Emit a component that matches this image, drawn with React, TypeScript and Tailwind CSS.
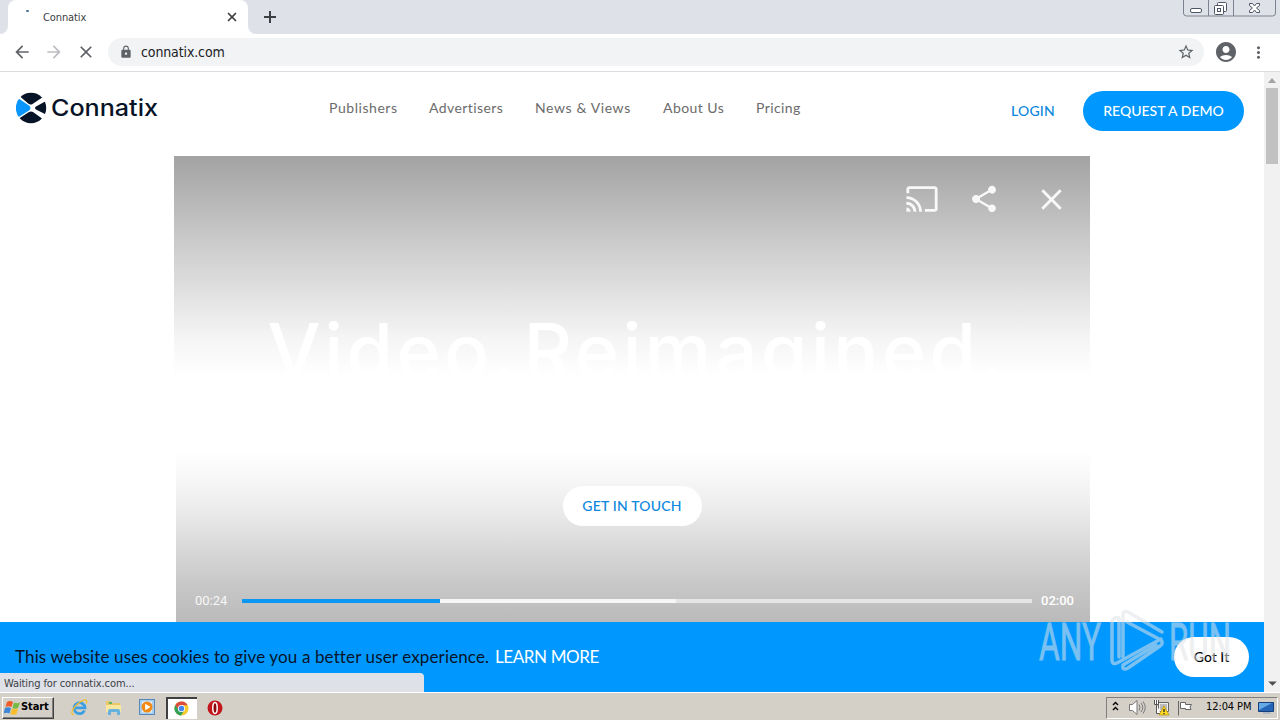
import type { ReactNode } from "react";
import { X } from "lucide-react";
import { MdArrowBack, MdArrowForward, MdAccountCircle, MdCast, MdClose, MdLock, MdMoreVert, MdShare, MdStarBorder } from "react-icons/md";

const NAV_LINKS = [
  { label: "Publishers", className: "w-[68px] tracking-[0.55px]" },
  { label: "Advertisers", className: "w-[74px] tracking-[0.42px]" },
  { label: "News & Views", className: "w-[96px] tracking-[0.6px]" },
  { label: "About Us", className: "w-[61px] tracking-[0.45px]" },
  { label: "Pricing", className: "w-[45px] tracking-[0.4px]" },
];

function TabStrip() {
  return (
    <div className="flex h-[34px] shrink-0 items-start bg-[#dee1e8]">
      <div className="h-full w-2 bg-white">
        <div className="h-full rounded-br-lg bg-[#dee1e8]" />
      </div>
      <div className="flex h-full w-60 items-center rounded-t-lg bg-white pr-[9px]">
        <div className="mt-[-13px] ml-[18px] h-[2px] w-[3px] rounded-full bg-[#4a7298]" />
        <span className="mt-[2px] ml-[14px] text-[11px] tracking-[-0.1px] text-[#3c4043]">Connatix</span>
        <X className="ml-auto size-[14px] text-[#3c4043]" strokeWidth={3} />
      </div>
      <div className="h-full w-2 bg-white">
        <div className="h-full rounded-bl-lg bg-[#dee1e8]" />
      </div>
      <svg className="mt-[11px] ml-[8px] size-3" viewBox="0 0 12 12" stroke="#3c4043" strokeWidth="2">
        <path d="M6 0v12M0 6h12" />
      </svg>
      <svg className="ml-auto mr-[4px] h-[17px] w-[93px]" viewBox="0 0 93 17" fill="none" stroke="#7c8290">
        <path d="M.5 0v13q0 3 3 3h86q3 0 3-3V0M25.500 0v16M50.500 0v16" />
        <g stroke="#4e5564">
          <rect x="7.500" y="8.500" width="11" height="4" rx="1.500" fill="#fff" />
          <rect x="34.500" y="2.500" width="9" height="9" rx="1" fill="#fff" />
          <rect x="31.500" y="5.500" width="9" height="9" rx="1" fill="#fff" />
          <rect x="34.500" y="8.500" width="3" height="3" />
          <path fill="#fff" d="M66.500 3.500h3l2 2.500 2-2.500h3v2l-3 2.500 3 2.500v2h-3l-2-2.500-2 2.500h-3v-2l3-2.500-3-2.500z" />
        </g>
      </svg>
    </div>
  );
}

function Toolbar() {
  return (
    <div className="flex h-[38px] shrink-0 items-center border-b border-[#dadce0] bg-white pb-px">
      <MdArrowBack className="ml-3 size-5 text-[#5f6368]" />
      <MdArrowForward className="ml-3 size-5 text-[#bcbec1]" />
      <MdClose className="ml-3 size-5 text-[#5f6368]" />
      <div className="ml-3 flex h-7 w-[1096px] items-center rounded-full bg-[#f1f3f4] pr-[9px] pl-[11px]">
        <MdLock className="size-[14px] text-[#5f6368]" />
        <span className="ml-2 text-sm tracking-[-0.12px] text-[#202124]">connatix.com</span>
        <MdStarBorder className="ml-auto size-[18px] text-[#5f6368]" />
      </div>
      <MdAccountCircle className="ml-[10px] size-6 text-[#5f6368]" />
      <MdMoreVert className="ml-[11px] size-[19px] text-[#5f6368]" />
    </div>
  );
}

function Logo() {
  return (
    <svg className="h-[32px] w-[143px]" viewBox="0 0 143 32">
      <defs>
        <clipPath id="disc">
          <circle cx="15" cy="16" r="15.200" />
        </clipPath>
      </defs>
      <g clipPath="url(#disc)">
        <path fill="#071327" d="M4 4.500 9 0h13l5 5-10.500 7q-2 1.200-4-.2zM31 8.500V23l-11-5.500q-2-1.500 0-3zM3 26.500l10-6.500q2-1.200 4 0l9 6.500-4 6H8z" />
        <path fill="#0a96ff" d="M-1 4 13 13.500q3 2.500 0 5L-1 27.500z" />
      </g>
      <text x="35" y="24" textLength="107" lengthAdjust="spacingAndGlyphs" fontSize="22.500" fontWeight="500" fill="#071327" className="font-[Inter,sans-serif]">
        Connatix
      </text>
    </svg>
  );
}

function SiteHeader() {
  return (
    <header className="flex h-[84px] shrink-0 items-start pt-5 pl-4">
      <Logo />
      <nav className="mt-[5px] ml-[170px] flex gap-8 text-[14px] leading-[22px] whitespace-nowrap text-[#6b6b6b]">
        {NAV_LINKS.map((link) => (
          <a key={link.label} className={link.className}>
            {link.label}
          </a>
        ))}
      </nav>
      <div className="-mt-px mr-5 ml-auto flex h-10 items-center gap-7 text-sm font-medium whitespace-nowrap">
        <a className="w-11 tracking-[0.2px] text-[#0a87dd]">LOGIN</a>
        <a className="flex h-10 w-[161px] items-center justify-center rounded-full bg-[#0098ff] text-white">REQUEST A DEMO</a>
      </div>
    </header>
  );
}

function VideoPlayer() {
  return (
    <section className="flex flex-1 flex-col">
      <div className="ml-[173.500px] flex h-[294px] w-[916.500px] flex-col bg-[linear-gradient(#a3a3a3_0px,#b5b5b5_40px,#cacaca_84px,#e4e4e4_144px,#f4f4f4_180px,#fcfcfc_208px,#fff_220px)]">
        <div className="flex h-[86px] items-center justify-end pr-[21px] text-[#f8f8f8]">
          <MdCast className="size-[34px]" />
          <MdShare className="ml-[29px] size-8" />
          <MdClose className="ml-[34px] size-[35px]" />
        </div>
        <h1 className="mt-[63px] ml-[94px] font-[Inter,sans-serif] text-[75px] leading-[92px] font-medium tracking-[3.5px] whitespace-nowrap text-white [word-spacing:-18px]">
          Video. Reimagined.
        </h1>
      </div>
      <div className="ml-[176px] flex h-[172px] w-[914px] flex-col items-center bg-[linear-gradient(#fff,#f8f8f8_26px,#ededed_56px,#d9d9d9_97px,#c7c7c7_136px,#bababa)] pt-9">
        <a className="mr-[2px] flex h-10 w-[139px] items-center justify-center rounded-full bg-white text-sm font-medium tracking-[0.2px] whitespace-nowrap text-[#0a87dd]">
          GET IN TOUCH
        </a>
        <div className="mt-[65px] flex w-full items-center pl-[19px] font-[Roboto,sans-serif] text-[13px] leading-[20px] text-white">
          <span className="w-[47px] text-[#f7f7f7]">00:24</span>
          <div className="flex h-1 w-[790px] bg-[#e5e5e5]">
            <div className="w-[198px] bg-[#0c98f2]" />
            <div className="w-[236px] bg-[#f7f7f7]" />
          </div>
          <span className="ml-[9px] font-medium">02:00</span>
        </div>
      </div>
    </section>
  );
}

function Watermark() {
  return (
    <svg className="absolute right-[46px] bottom-[17px] h-[66px] w-[196px] opacity-55" viewBox="0 0 196 66" fill="none" stroke="#dfe3e6">
      {/* condensed lettering either side of the play mark */}
      <g fill="#dfe3e6" stroke="#dfe3e6" strokeWidth="0.8" fontSize="51" className="font-[Roboto,sans-serif]">
        <text x="1" y="51" textLength="62" lengthAdjust="spacingAndGlyphs">ANY</text>
        <text x="131" y="51" textLength="62" lengthAdjust="spacingAndGlyphs">RUN</text>
      </g>
      <g strokeWidth="3.500" strokeLinejoin="round" strokeLinecap="round">
        <path d="M81 48V9M81 9q-7-1-7 5v37q0 5 5 3l44-24" />
        <path d="M85 32V6q0-5 5-3l34 20M85 13v35M89 13l32 17q6 3 1 7L90 59q-6 3-5-3l33-20" />
      </g>
    </svg>
  );
}

function CookieBar() {
  return (
    <div className="absolute inset-x-0 bottom-0 flex h-[70px] items-center bg-[#0098ff] pr-[15px] pb-px pl-[15px] text-[17px] whitespace-nowrap">
      <p className="w-[480px] tracking-[0.13px] text-[#071327]">This website uses cookies to give you a better user experience.</p>
      <a className="tracking-[-0.4px] text-white">LEARN MORE</a>
      <a className="mt-px ml-auto flex h-10 w-[75px] items-center justify-center rounded-full bg-white text-sm font-medium text-black">Got It</a>
    </div>
  );
}

function Scrollbar() {
  return (
    <div className="flex w-4 shrink-0 flex-col items-center bg-[#f1f1f1]">
      <svg className="size-4 shrink-0" viewBox="0 0 16 16" fill="#a3a3a3">
        <path d="M4 11l4-5 4 5z" />
      </svg>
      <div className="h-[76px] w-3 bg-[#c1c1c1]" />
      <svg className="mt-auto size-[17px]" viewBox="0 0 16 16" fill="#505050">
        <path d="M4 6l4 4 4-4z" />
      </svg>
    </div>
  );
}

function TaskbarItem({ active, children }: { active?: boolean; children: ReactNode }) {
  return (
    <div
      className={
        active
          ? "flex h-[22px] w-[31px] items-center justify-center border-t-2 border-l-2 border-[#404040] bg-white pr-[2px]"
          : "flex h-[22px] w-[31px] items-center justify-center"
      }
    >
      {children}
    </div>
  );
}

function Taskbar() {
  return (
    <footer className="flex h-7 shrink-0 items-center border-t border-white bg-[#d4d0c8] pt-[2px] text-[11px] text-black">
      <div className="ml-[2px] flex h-[22px] w-[52px] items-center border border-t-white border-r-[#404040] border-b-[#404040] border-l-white pl-px font-bold tracking-[-0.1px] shadow-[inset_-1px_-1px_#808080]">
        <svg className="mr-px size-4 shrink-0" viewBox="0 0 16 16">
          <path fill="#ef5b26" d="M3 2q3-2 6 0L7.500 7Q4.500 5.500 1.500 7z" />
          <path fill="#78b943" d="M10 2.500q3 1.500 6 0L14 8q-3 1.500-5.500 0z" />
          <path fill="#3e86d8" d="M1 8q3-1.500 6 0l-1.500 5.500Q3 12-.5 13.500z" />
          <path fill="#f8bd28" d="M8 8.500q3 1.500 6 0L12.500 14Q9.500 15.500 6.500 14z" />
        </svg>
        Start
      </div>
      <div className="ml-[10px] flex gap-[3px]">
        <TaskbarItem>
          <svg className="size-[17px]" viewBox="0 0 17 17" fill="none">
            <path stroke="#3b9fe2" strokeWidth="2.800" d="M13.500 11.500A5.500 5.500 0 1 1 14 8.800H4" />
            <path stroke="#f1bd32" strokeWidth="1.300" d="M3 15.500C-1 16 1 10 6 5.500s10-6 9.800-3c0 .8-.3 1.500-.8 2" />
          </svg>
        </TaskbarItem>
        <TaskbarItem>
          <svg className="size-[17px]" viewBox="0 0 17 17">
            <path fill="#e7c766" d="M1 2h5l1 2h8v9H1z" />
            <path fill="#60b662" d="M4 3h3v2H4z" />
            <path fill="#f9e79f" d="M1 6h15v7H1z" />
            <path fill="#68b3de" d="M3 16v-4q0-2 2-2h8q2 0 2 2v4h-3v-3H6v3z" />
          </svg>
        </TaskbarItem>
        <TaskbarItem>
          <svg className="size-[17px]" viewBox="0 0 17 17">
            <rect x=".5" y=".5" width="15" height="15" fill="#a9cdec" stroke="#5689b9" />
            <rect x="3" y="2.500" width="10" height="11" fill="#e4f1fb" />
            <circle cx="8" cy="8" r="5.500" fill="#f28a13" />
            <path fill="#fff" d="M6.200 4.800v6.400L11.500 8z" />
          </svg>
        </TaskbarItem>
        <TaskbarItem active>
          <svg className="size-[15px]" viewBox="0 0 16 16">
            <circle cx="8" cy="8" r="7.500" fill="#f7ca2e" />
            <path fill="#dd4b3e" d="M1.400 4.300A7.500 7.500 0 0 1 14.600 4.500H8L4.800 9.500z" />
            <path fill="#34a158" d="M1.400 4.300A7.500 7.500 0 0 0 7.500 15.500L11 9.800 5 9.500z" />
            <circle cx="8" cy="8" r="3.800" fill="#fff" />
            <circle cx="8" cy="8" r="2.900" fill="#4286ee" />
          </svg>
        </TaskbarItem>
        <TaskbarItem>
          <svg className="mr-[2px] size-4" viewBox="0 0 16 16">
            <circle cx="8" cy="8" r="7.500" fill="#c3161c" />
            <ellipse cx="8" cy="8" rx="2.200" ry="5.500" fill="#8c090e" stroke="#fff" strokeWidth="1.500" />
          </svg>
        </TaskbarItem>
      </div>
      <div className="mr-[2px] ml-auto flex h-[22px] w-[172px] items-center border border-t-[#808080] border-r-white border-b-white border-l-[#808080]">
        <svg className="mb-1 ml-[5px] h-3 w-[7px]" viewBox="0 0 7 12" fill="none" stroke="#000" strokeWidth="1.400">
          <path d="M1 5l2.500-2.500L6 5M1 10l2.500-2.500L6 10" />
        </svg>
        <svg className="ml-[10px] size-[17px]" viewBox="0 0 17 17" fill="none" stroke="#777">
          <path fill="#fff" d="M.5 5.500h3L8 1.500v14l-4.500-4h-3z" />
          <path d="M10 5.500q2 3 0 6M12 4q3.500 4.500 0 9M14 2.500q4.500 6 0 12" />
        </svg>
        <svg className="ml-[7px] size-[17px]" viewBox="0 0 17 17" fill="none">
          <path fill="#eee" stroke="#666" d="M5.500 3.500h10v9h-10z" />
          <path fill="#bbb" d="M7 5h7v6H7z" />
          <path fill="#fff" stroke="#555" d="M1.500 1v4.500h4V1M3.500 1v4M3.500 5v9.500h4" />
          <path fill="#ffdc28" stroke="#b58d00" strokeWidth=".7" d="M11 7l5 9H6z" />
          <path stroke="#222" strokeWidth="1.300" d="M11 10v3m0 1v1.200" />
        </svg>
        <svg className="ml-[7px] size-4" viewBox="0 0 16 16" fill="#fff" stroke="#666">
          <path d="M1.500 1v14.500" />
          <path d="M3.500 2.500h5v2h6L13 7l1 2.500H8.500v-1h-5z" />
        </svg>
        <span className="ml-[13px] w-[48px] tracking-[-0.1px] whitespace-nowrap">12:04 PM</span>
        <svg className="ml-1 h-[14px] w-4" viewBox="0 0 16 14">
          <path fill="#2565b7" stroke="#173e78" d="M.5 1.500h15v9H.5z" />
          <path fill="#66a9e7" d="M1 2h13L1 9z" />
          <path fill="#b1b8c1" d="M5 11h7l1 2H5z" />
        </svg>
      </div>
    </footer>
  );
}

export default function App() {
  return (
    <div className="flex h-[720px] w-[1280px] flex-col overflow-hidden bg-white font-['DejaVu_Sans_Condensed','DejaVu_Sans',sans-serif]">
      <TabStrip />
      <Toolbar />
      <div className="relative flex h-[620px] shrink-0">
        <main className="relative flex flex-1 flex-col overflow-hidden font-[Lato,sans-serif] [font-variant-ligatures:none]">
          <SiteHeader />
          <VideoPlayer />
          <CookieBar />
        </main>
        <Scrollbar />
        <Watermark />
        <div className="absolute bottom-0 left-0 flex h-[19px] w-[424px] items-center rounded-tr bg-[#dee1e8] pt-[3px] pl-1 text-[11px] tracking-[-0.1px] text-[#3c4043]">
          Waiting for connatix.com...
        </div>
      </div>
      <Taskbar />
    </div>
  );
}
